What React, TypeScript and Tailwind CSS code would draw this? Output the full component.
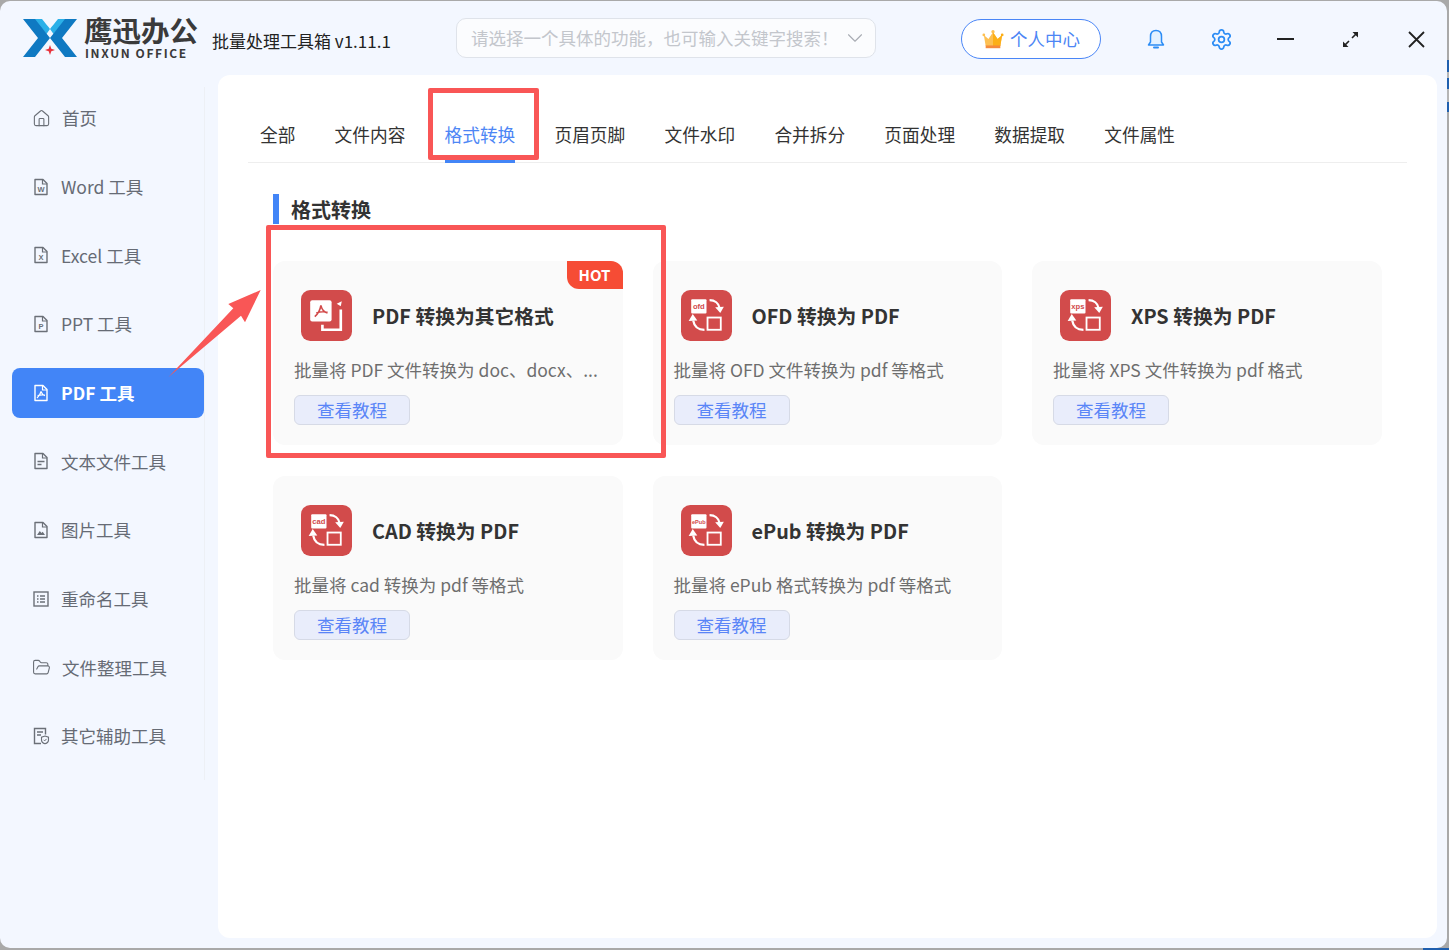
import { Home, FolderOpen, Settings, ChevronDown } from 'lucide-react'
import type { ReactNode } from 'react'

function FileIcon({ children, color = '#6b7078' }: { children?: ReactNode; color?: string }) {
  return (
    <svg width="18" height="18" viewBox="0 0 18 18" fill="none" className="shrink-0">
      <path d="M3 1.5h8l4 4v11H3z" stroke={color} strokeWidth="1.4" strokeLinejoin="round" />
      <path d="M10.5 1.5v4.5H15" stroke={color} strokeWidth="1.2" />
      {children}
    </svg>
  )
}

function Letter({ c, color = '#6b7078' }: { c: string; color?: string }) {
  return (
    <text x="9" y="14" textAnchor="middle" fontSize="7.5" fontWeight="700" fontFamily="Liberation Sans" fill={color}>
      {c}
    </text>
  )
}

function AcrobatMark({ color, sw = 1.2 }: { color: string; sw?: number }) {
  return <path d="M9 7.5c-.6 2.5-2 4.8-4 6.5M9 7.5c.7 2.4 2 3.5 4 4.3M5.6 11.6c2.5-.8 5-1 7.4-.4" stroke={color} strokeWidth={sw} fill="none" />
}

function NavIcon({ name }: { name: string }) {
  switch (name) {
    case 'home':
      return <Home size={19} strokeWidth={1.4} color="#6b7078" className="shrink-0" />
    case 'word':
      return <FileIcon><Letter c="W" /></FileIcon>
    case 'excel':
      return <FileIcon><Letter c="X" /></FileIcon>
    case 'ppt':
      return <FileIcon><Letter c="P" /></FileIcon>
    case 'pdf':
      return <FileIcon color="#ffffff"><AcrobatMark color="#ffffff" /></FileIcon>
    case 'text':
      return (
        <FileIcon>
          <path d="M5.5 9.5h7M5.5 12.5h4" stroke="#6b7078" strokeWidth="1.3" />
        </FileIcon>
      )
    case 'image':
      return (
        <FileIcon>
          <path d="M5 14l2.8-4 1.7 2 1.2-1.2L13 14z" fill="#6b7078" />
        </FileIcon>
      )
    case 'rename':
      return (
        <svg width="18" height="18" viewBox="0 0 18 18" fill="none" className="shrink-0">
          <rect x="2" y="2" width="14" height="14" stroke="#6b7078" strokeWidth="1.4" />
          <path d="M5 6h1.5M5 9h1.5M5 12h1.5M8 6h5M8 9h5M8 12h5" stroke="#6b7078" strokeWidth="1.3" />
        </svg>
      )
    case 'folder':
      return <FolderOpen size={19} strokeWidth={1.4} color="#6b7078" className="shrink-0" />
    default:
      return (
        <svg width="18" height="18" viewBox="0 0 18 18" fill="none" className="shrink-0">
          <path d="M9 16.5H2.5v-15h11v6" stroke="#6b7078" strokeWidth="1.4" />
          <path d="M5 5h6M5 8h4" stroke="#6b7078" strokeWidth="1.3" />
          <path d="M13 9l3.5 1.2v3c0 1.7-1.6 3-3.5 3.6-1.9-.6-3.5-1.9-3.5-3.6v-3z" stroke="#6b7078" strokeWidth="1.1" fill="#f3f7ff" />
          <path d="M11.6 12.8l1.1 1.1 1.8-2" stroke="#6b7078" strokeWidth="1" />
        </svg>
      )
  }
}

const navItems = [
  { icon: 'home', label: '首页' },
  { icon: 'word', label: 'Word 工具' },
  { icon: 'excel', label: 'Excel 工具' },
  { icon: 'ppt', label: 'PPT 工具' },
  { icon: 'pdf', label: 'PDF 工具', active: true },
  { icon: 'text', label: '文本文件工具' },
  { icon: 'image', label: '图片工具' },
  { icon: 'rename', label: '重命名工具' },
  { icon: 'folder', label: '文件整理工具' },
  { icon: 'other', label: '其它辅助工具' },
]

const tabs = ['全部', '文件内容', '格式转换', '页眉页脚', '文件水印', '合并拆分', '页面处理', '数据提取', '文件属性']

const cards = [
  { tag: 'pdf', title: 'PDF 转换为其它格式', desc: '批量将 PDF 文件转换为 doc、docx、...', hot: true },
  { tag: 'ofd', title: 'OFD 转换为 PDF', desc: '批量将 OFD 文件转换为 pdf 等格式' },
  { tag: 'xps', title: 'XPS 转换为 PDF', desc: '批量将 XPS 文件转换为 pdf 格式' },
  { tag: 'cad', title: 'CAD 转换为 PDF', desc: '批量将 cad 转换为 pdf 等格式' },
  { tag: 'ePub', title: 'ePub 转换为 PDF', desc: '批量将 ePub 格式转换为 pdf 等格式' },
]

function CardIcon({ tag }: { tag: string }) {
  if (tag === 'pdf') {
    return (
      <svg width="51" height="51" viewBox="0 0 50 50" className="shrink-0">
        <rect width="50" height="50" rx="9" fill="#d24b4b" />
        <rect x="9" y="10" width="21" height="21" rx="2" fill="#ffffff" />
        <path d="M19.5 15c-.6 4-2.5 8-6 11M19.5 15c.8 4 3 6.5 6.5 7.5M15 22.5c3.5-1.2 7.5-1.5 11-.6" stroke="#d24b4b" strokeWidth="1.6" fill="none" />
        <path d="M39 19v20H21v-5" stroke="#ffffff" strokeWidth="2.6" fill="none" />
        <path d="M40 11l-1 5-4-2.4z" fill="#ffffff" />
      </svg>
    )
  }
  return (
    <svg width="51" height="51" viewBox="0 0 50 50" className="shrink-0">
      <rect width="50" height="50" rx="9" fill="#d24b4b" />
      <rect x="10" y="9" width="15" height="14" rx="1" fill="#ffffff" />
      <text x="17.5" y="18.500" textAnchor="middle" fontSize={tag === 'ePub' ? 5.5 : 7.5} fontWeight="700" fontFamily="Liberation Sans" fill="#d24b4b">
        {tag}
      </text>
      <path d="M28 10c5 0 9 3 10 8" stroke="#ffffff" strokeWidth="2.2" fill="none" />
      <path d="M33.5 17l8.5-.5-3.500 6z" fill="#ffffff" />
      <path d="M23 39c-6 0-10-3-11-9" stroke="#ffffff" strokeWidth="2.2" fill="none" />
      <path d="M7.500 30.500l8.500-.5-4.500-6.500z" fill="#ffffff" />
      <rect x="26" y="27" width="13" height="12" stroke="#ffffff" strokeWidth="1.8" fill="none" />
    </svg>
  )
}

function Card({ card }: { card: (typeof cards)[number] }) {
  return (
    <div className="relative h-[184px] rounded-xl bg-[#fafafa] pl-[21px]">
      {card.hot && (
        <div className="absolute right-0 top-0 flex h-7 w-14 items-center justify-center rounded-bl-xl rounded-tr-xl bg-[#f64c35] text-[15px] font-bold text-white">
          HOT
        </div>
      )}
      <div className="ml-[7px] flex items-center gap-5 pt-[29px]">
        <CardIcon tag={card.tag} />
        <div className="text-[19.8px] font-semibold leading-none text-[#333333]">{card.title}</div>
      </div>
      <div className="mt-[15px] whitespace-nowrap text-[17.5px] leading-[28px] text-[#6e6e6e]">{card.desc}</div>
      <button className="mt-[11px] h-[30px] w-[116px] rounded-md border border-[#d6dae6] bg-[#e9edfb] text-[17.5px] leading-none text-[#5a85f7]">
        查看教程
      </button>
    </div>
  )
}

function Logo() {
  return (
    <div className="flex items-center gap-[7px]">
      <svg width="54" height="38" viewBox="0 0 54 38" className="shrink-0">
        <path d="M10 0h9c3 4 6 7 8 10l-3.500 5z" fill="#2bb0e8" />
        <path d="M44 0h-9c-3 4-6 7-8 10l3.500 5z" fill="#2bb0e8" />
        <path d="M0 0h12l15 19-15 19H0l15-19z" fill="#0f79c2" />
        <path d="M54 0H42L27 19l15 19h12L39 19z" fill="#0f79c2" />
        <path d="M27 26l1.300 3.700L32 31l-3.700 1.300L27 36l-1.300-3.700L22 31l3.700-1.300z" fill="#e8333c" />
      </svg>
      <div className="flex flex-col gap-[3px]">
        <div className="whitespace-nowrap text-[28.500px] font-bold leading-[28px] text-[#3a3a3a]">鹰迅办公</div>
        <div className="whitespace-nowrap pl-px text-[12px] font-bold leading-[12px] tracking-[1.6px] text-[#3a3a3a]">INXUN OFFICE</div>
      </div>
    </div>
  )
}

function Header() {
  return (
    <header className="flex h-[74px] shrink-0 items-start">
      <div className="ml-[23px] mt-[15px] w-[189px] shrink-0">
        <Logo />
      </div>
      <div className="mt-[29px] w-[244px] shrink-0 whitespace-nowrap text-[17px] leading-[22px] text-[#222222]">批量处理工具箱 v1.11.1</div>
      <div className="mt-[17px] flex h-10 w-[420px] shrink-0 items-center justify-between rounded-[10px] border border-[#dfe3ea] bg-[#fbfcfe] pl-[14px] pr-[7px]">
        <span className="whitespace-nowrap text-[17.500px] text-[#c3c6cc]">请选择一个具体的功能，也可输入关键字搜索！</span>
        <ChevronDown size={26} strokeWidth={1} color="#a8acb3" />
      </div>
      <div className="ml-[85px] mt-[18px] flex h-10 w-[140px] shrink-0 items-center justify-center gap-[6px] rounded-full border border-[#4a86f7] bg-white">
        <svg width="22" height="21" viewBox="0 0 24 22">
          <path d="M2 6l5 4.500L12 3l5 7.500L22 6l-2 12H4z" fill="#fdc052" />
          <path d="M12 3l5 7.500L22 6l-2 12h-8z" fill="#fcaf17" />
          <rect x="4" y="17.500" width="16" height="3" fill="#f58a3c" />
          <circle cx="2" cy="6" r="1.500" fill="#fdc052" />
          <circle cx="12" cy="2.500" r="1.800" fill="#fdc052" />
          <circle cx="22" cy="6" r="1.500" fill="#fcaf17" />
        </svg>
        <span className="mb-px text-[17.500px] leading-none text-[#4d86f5]">个人中心</span>
      </div>
      <div className="ml-[43px] mt-[27px] flex w-[24px] shrink-0 justify-center">
        <svg width="20" height="22" viewBox="0 0 20 22">
          <path d="M10 2.500c3.500 0 5.500 2.500 5.500 6v5.500l2 3H2.500l2-3V8.500c0-3.500 2-6 5.500-6z" fill="#e3f1ff" stroke="#2b8cf5" strokeWidth="1.500" strokeLinejoin="round" />
          <path d="M8 19.500h4" stroke="#2b8cf5" strokeWidth="2" strokeLinecap="round" />
        </svg>
      </div>
      <div className="ml-[41px] mt-[27px] flex w-[24px] shrink-0 justify-center">
        <Settings size={23} strokeWidth={1.8} color="#2b8cf5" />
      </div>
      <div className="ml-[44px] mt-[37px] h-[2px] w-[17px] shrink-0 bg-[#222222]" />
      <div className="ml-[48px] mt-[30px] shrink-0">
        <svg width="17" height="17" viewBox="0 0 17 17">
          <path d="M10 7l5-5M7 10l-5 5" stroke="#222222" strokeWidth="1.600" />
          <path d="M10.500 1h5.500v5.500zM1 10.500V16h5.500z" fill="#222222" />
        </svg>
      </div>
      <div className="ml-[49px] mt-[30px] shrink-0">
        <svg width="17" height="17" viewBox="0 0 17 17">
          <path d="M1 1l15 15M16 1L1 16" stroke="#222222" strokeWidth="1.800" />
        </svg>
      </div>
    </header>
  )
}

function Sidebar() {
  return (
    <aside className="relative w-[218px] shrink-0 pl-3">
      <div className="absolute bottom-[158px] left-[204px] top-[12px] w-px bg-[#edf0f5]" />
      <nav className="flex w-[192px] flex-col gap-[18.7px] pt-[18px]">
        {navItems.map((item) => (
          <div
            key={item.label}
            className={`flex h-[50px] items-center gap-[11px] rounded-lg pl-[20px] text-[17.5px] leading-none ${
              item.active ? 'bg-[#4285f7] font-bold text-white' : 'text-[#666b75]'
            }`}
          >
            <NavIcon name={item.icon} />
            <span className="whitespace-nowrap">{item.label}</span>
          </div>
        ))}
      </nav>
    </aside>
  )
}

function Content() {
  return (
    <main className="h-[863px] w-[1219px] shrink-0 rounded-xl bg-white pl-[30px]">
      <div className="flex h-[88px] w-[1159px] items-end gap-[39.200px] border-b border-[#eeeeee] pl-3">
        {tabs.map((tab) => {
          const active = tab === '格式转换'
          return (
            <div
              key={tab}
              className={`relative h-[41px] whitespace-nowrap text-[17.700px] leading-[26px] ${active ? 'text-[#4d86f5]' : 'text-[#333333]'}`}
            >
              {tab}
              {active && <div className="absolute -bottom-px left-0 h-[3px] w-[70px] bg-[#4285f7]" />}
            </div>
          )
        })}
      </div>
      <div className="ml-[25px] mt-[31px] flex h-[30px] items-center gap-3">
        <div className="h-[30px] w-[6px] bg-[#4285f7]" />
        <div className="pt-[2px] text-[20px] font-semibold leading-none text-[#333333]">格式转换</div>
      </div>
      <div className="ml-[25px] mt-[37px] grid w-[1108.500px] grid-cols-3 gap-x-[30px] gap-y-[31px]">
        {cards.map((card) => (
          <Card key={card.tag} card={card} />
        ))}
      </div>
    </main>
  )
}

export default function App() {
  return (
    <div className="relative h-[950px] w-[1449px] overflow-hidden bg-[#a9a9a9] font-['Noto_Sans_CJK_SC','Noto_Sans',sans-serif]">
      {/* right edge of what is behind the window */}
      <div className="absolute right-0 top-[60px] flex w-[2px] flex-col">
        <div className="h-[12px] bg-[#1f5fae]" />
        <div className="h-[6px] bg-[#b5b5b5]" />
        <div className="h-[11px] bg-[#1f5fae]" />
        <div className="h-[13px] bg-[#b5b5b5]" />
        <div className="h-[10px] bg-[#1f5fae]" />
      </div>
      <div className="absolute bottom-0 right-0 h-[2px] w-[26px] bg-[#1f5fae]" />

      <div className="flex h-[947px] w-[1447px] translate-y-px flex-col rounded-[10px] bg-[#f3f7ff]">
        <Header />
        <div className="flex">
          <Sidebar />
          <Content />
        </div>
      </div>

      {/* red markup drawn over the screenshot */}
      <div className="absolute left-[428px] top-[88px] h-[72px] w-[111px] rounded-[2px] border-[5px] border-[#f95656]" />
      <div className="absolute left-[266px] top-[225px] h-[233px] w-[400px] rounded-[2px] border-[5px] border-[#f95656]" />
      <svg className="absolute left-[165px] top-[285px]" width="100" height="95" viewBox="0 0 100 95">
        <path d="M3.300 92.300L68.300 23.300 63.300 19 95.700 5 80 37.300 76 30.700z" fill="#f95656" />
      </svg>
    </div>
  )
}
